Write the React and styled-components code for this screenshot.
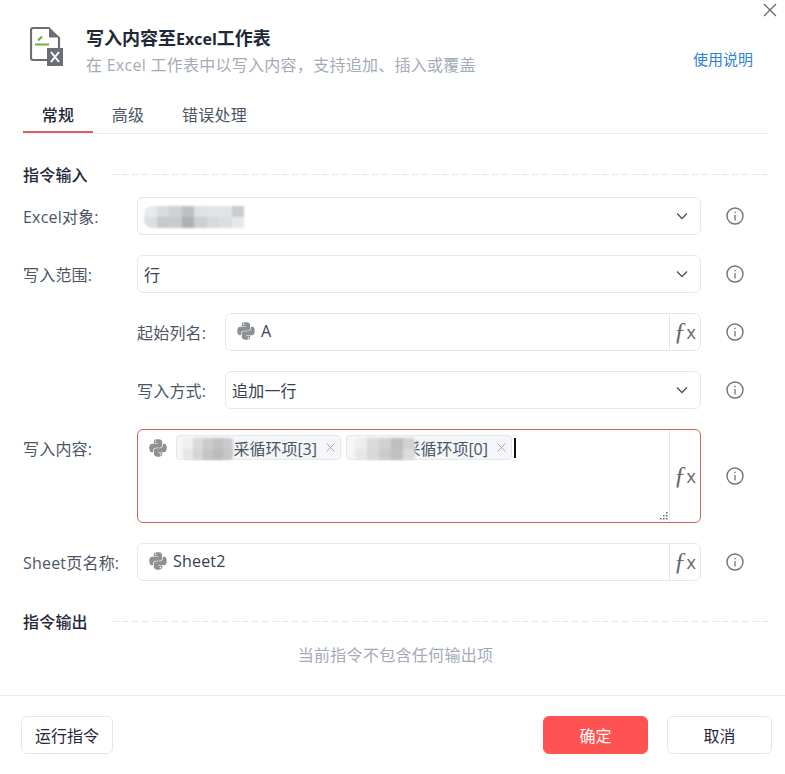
import React from 'react';
import styled, { createGlobalStyle } from 'styled-components';
import { FaPython } from 'react-icons/fa';

const GlobalStyle = createGlobalStyle`
  html, body {
    margin: 0;
    padding: 0;
    background: #fff;
  }
  * {
    box-sizing: border-box;
  }
`;

const Dialog = styled.div`
  position: relative;
  width: 785px;
  height: 774px;
  overflow: hidden;
  background: #fff;
  color: #1f2937;
  font-family: "Open Sans", "Noto Sans CJK SC", sans-serif;
  font-size: 16px;
  letter-spacing: 0.2px;
  display: flex;
  flex-direction: column;
`;

const CloseButton = styled.button`
  position: absolute;
  top: 3px;
  right: 8px;
  width: 14px;
  height: 14px;
  padding: 0;
  border: 0;
  background: none;
  color: #666;
  svg {
    display: block;
  }
`;

const Header = styled.header`
  height: 100px;
  padding: 26px 32px 0 30px;
  display: flex;
  align-items: flex-start;
`;

const TitleBlock = styled.div`
  margin-left: 23px;
  flex: 1;
`;

const Title = styled.h1`
  margin: 0;
  font-size: 18px;
  line-height: 24px;
  font-weight: 700;
  letter-spacing: 0;
  color: #1f2937;
`;

const TitleLatin = styled.span`
  font-size: 16px;
`;

const Subtitle = styled.p`
  margin: 2px 0 0;
  font-size: 16px;
  line-height: 24px;
  letter-spacing: 0.27px;
  color: #a3abb8;
`;

const HelpLink = styled.a`
  margin-top: 23px;
  font-size: 15px;
  line-height: 20px;
  letter-spacing: 0;
  color: #2f80d8;
`;

const Tabs = styled.nav`
  margin: 0 17px 0 23px;
  height: 34px;
  display: flex;
  border-bottom: 1px solid #eceef0;
`;

const Tab = styled.div`
  width: ${p => p.$width}px;
  height: 33px;
  line-height: 30px;
  text-align: center;
  color: ${p => (p.$active ? '#1f2937' : '#4b5563')};
  font-weight: ${p => (p.$active ? 500 : 400)};
  border-bottom: ${p => (p.$active ? '2px solid #d9605f' : '0')};
`;

const Body = styled.main`
  flex: 1;
  padding: 28px 17px 0 23px;
  display: flex;
  flex-direction: column;
`;

const Section = styled.div`
  height: 24px;
  margin-top: ${p => p.$gap || 0}px;
  display: flex;
  align-items: center;
  font-weight: 500;
  color: #1f2937;
  &::after {
    content: '';
    flex: 1;
    height: 1px;
    margin-left: 24px;
    background: repeating-linear-gradient(90deg, #e4e7ea 0 7px, transparent 7px 10px);
  }
`;

const Rows = styled.div`
  margin-top: 11px;
  display: flex;
  flex-direction: column;
  gap: 20px;
`;

const Row = styled.div`
  display: flex;
  align-items: ${p => (p.$top ? 'flex-start' : 'center')};
  padding-left: ${p => (p.$indent ? '114px' : '0')};
`;

const Label = styled.label`
  width: ${p => (p.$indent ? 88 : 114)}px;
  height: 38px;
  flex: none;
  line-height: 40px;
  color: #4b5563;
`;

const Field = styled.div`
  position: relative;
  flex: 1;
  height: ${p => (p.$tall ? 94 : 38)}px;
  display: flex;
  align-items: ${p => (p.$tall ? 'flex-start' : 'center')};
  border: 1px solid ${p => (p.$error ? '#d9605f' : '#e5e7ea')};
  border-radius: 6px;
  background: #fff;
  padding-left: ${p => (p.$expr ? 10 : 6)}px;
  padding-top: ${p => (p.$tall ? 5 : 0)}px;
`;

const FieldText = styled.span`
  flex: 1;
  min-width: 0;
  line-height: 24px;
  color: #374151;
  margin-top: ${p => (p.$latin ? -2 : 2)}px;
`;

const Chevron = styled.svg`
  width: 12px;
  height: 8px;
  margin-right: 12px;
  flex: none;
  color: #4b5563;
`;

const PythonMark = styled(FaPython)`
  width: 20px;
  height: 20px;
  flex: none;
  margin-right: ${p => (p.$tall ? 8 : 5)}px;
  margin-top: ${p => (p.$tall ? '3px' : '-2px')};
  color: #8e9194;
`;

const FxSlot = styled.div`
  width: 31px;
  flex: none;
  align-self: stretch;
  margin-top: ${p => (p.$tall ? '-5px' : '0')};
  border-left: 1px solid #e5e7ea;
  display: flex;
  align-items: center;
  justify-content: center;
  color: #63676e;
`;

const FxF = styled.span`
  font-family: "Liberation Serif", serif;
  font-style: italic;
  font-size: 25px;
  line-height: 24px;
`;

const FxX = styled.span`
  font-family: "Open Sans", sans-serif;
  font-size: 18px;
  line-height: 24px;
`;

const InfoSlot = styled.div`
  width: 67px;
  flex: none;
  align-self: stretch;
  display: flex;
  align-items: center;
  padding-left: 25px;
  color: #6f747c;
`;

const Chips = styled.div`
  flex: 1;
  display: flex;
  align-items: center;
  gap: 5px;
`;

const Chip = styled.span`
  height: 25px;
  width: ${p => p.$width}px;
  padding: 0 5px 0 8px;
  display: inline-flex;
  align-items: center;
  background: #f5f6f7;
  border: 1px solid #e5e7ea;
  border-radius: 4px;
  font-size: 16px;
  letter-spacing: 0;
  color: #4b5563;
  white-space: nowrap;
`;

const ChipText = styled.span`
  flex: 1;
  text-align: right;
`;

const ChipClose = styled.svg`
  width: 9px;
  height: 9px;
  margin-left: 9px;
  flex: none;
  color: #a8adb5;
`;

const Caret = styled.span`
  width: 2px;
  height: 20px;
  margin-left: -3px;
  background: #111;
`;

const Grip = styled.svg`
  position: absolute;
  right: 32px;
  bottom: 2px;
  width: 8px;
  height: 8px;
  color: #666;
`;

const Mosaic = styled.span`
  display: inline-grid;
  grid-template-columns: repeat(${p => p.$cols}, ${p => p.$cell}px);
  grid-auto-rows: ${p => p.$rowHeight}px;
  vertical-align: middle;
  margin-top: -3px;
  flex: none;
  filter: blur(0.8px);
  border-radius: 8px 0 0 8px;
  overflow: hidden;
`;

const MosaicCell = styled.i`
  display: block;
  background: ${p => p.$shade};
`;

const ChipMosaic = styled(Mosaic)`
  position: absolute;
  top: 3px;
  margin-top: 0;
  left: ${p => p.$left}px;
  border-radius: 4px;
`;

const ChipWrap = styled.span`
  position: relative;
  display: inline-flex;
`;

const EmptyNote = styled.p`
  margin: 10px 0 0;
  text-align: center;
  line-height: 24px;
  letter-spacing: 0.3px;
  color: #a3abb8;
`;

const Footer = styled.footer`
  height: 79px;
  padding: 20px 13px 0 21px;
  border-top: 1px solid #eceef0;
  display: flex;
  align-items: flex-start;
  gap: 19px;
`;

const Button = styled.button`
  width: ${p => p.$width}px;
  height: 38px;
  padding: 0;
  border: 1px solid ${p => (p.$primary ? '#ff5252' : '#e5e7ea')};
  border-radius: 6px;
  background: ${p => (p.$primary ? '#ff5252' : '#fff')};
  color: ${p => (p.$primary ? '#fff' : '#1f2937')};
  font: inherit;
  &:first-child {
    margin-right: auto;
  }
`;

const Mosaics = {
  object: ['#e8e9ea', '#d9dbdd', '#cfd1d4', '#bcc0c4', '#dfe1e2', '#e2e3e4', '#e2e4e5', '#c9cbce', '#dcdee0', '#c6c9cc', '#c8cbce', '#adb1b5', '#cdd0d3', '#d7d9db', '#dcdedf', '#e6e7e8'],
  chipA: ['#eef0f1', '#d8dadb', '#c9cbcd', '#bfc1c3', '#c8cacc', '#e4e5e6', '#d3d5d6', '#c2c4c6', '#b9bbbd', '#c4c6c8'],
  chipB: ['#eceeef', '#d9dbdc', '#cfd1d2', '#bcbec0', '#cfd1d3', '#e6e7e8', '#d7d9da', '#c9cbcd', '#bfc1c3', '#d9dbdc'],
};

const ExcelIcon = () => (
  <svg width="33" height="40" viewBox="0 0 33 40" fill="none">
    <path d="M19.500 2H3a2 2 0 0 0-2 2v28a2 2 0 0 0 2 2h15M29 11v12" stroke="#6b6e75" strokeWidth="2.200" />
    <path d="M19 1l11 10.500H19z" fill="#6b6e75" />
    <path d="M8 14.500l4-4M5 18.500h14" stroke="#6cb33f" strokeWidth="2.200" />
    <rect x="17" y="22" width="16" height="18" fill="#6b6e75" />
    <path d="M21 26l8 10M29 26l-8 10" stroke="#fff" strokeWidth="2" />
  </svg>
);

const InfoIcon = () => (
  <svg width="18" height="18" viewBox="0 0 18 18" fill="none" stroke="currentColor">
    <circle cx="9" cy="9" r="8" strokeWidth="1.400" />
    <path d="M9 8v5.500" strokeWidth="1.300" />
    <path d="M9 4.800v1.400" strokeWidth="1.300" />
  </svg>
);

const ChevronIcon = () => (
  <Chevron viewBox="0 0 12 8" fill="none" stroke="currentColor" strokeWidth="1.400">
    <path d="M1 1.500l5 5 5-5" />
  </Chevron>
);

const ChipCloseIcon = () => (
  <ChipClose viewBox="0 0 9 9" fill="none" stroke="currentColor" strokeWidth="1">
    <path d="M.5.500l8 8M8.500.500l-8 8" />
  </ChipClose>
);

const FxButton = ({ tall }) => (
  <FxSlot $tall={tall}>
    <FxF>ƒ</FxF>
    <FxX>x</FxX>
  </FxSlot>
);

const MosaicBlock = ({ as: Comp = Mosaic, shades, ...rest }) => (
  <Comp {...rest}>
    {shades.map((shade, i) => <MosaicCell key={i} $shade={shade} />)}
  </Comp>
);

const App = () => (
  <Dialog>
    <GlobalStyle />
    <CloseButton aria-label="关闭">
      <svg width="14" height="14" viewBox="0 0 14 14" fill="none" stroke="currentColor" strokeWidth="1.200">
        <path d="M1 1l12 12M13 1L1 13" />
      </svg>
    </CloseButton>

    <Header>
      <ExcelIcon />
      <TitleBlock>
        <Title>写入内容至<TitleLatin>Excel</TitleLatin>工作表</Title>
        <Subtitle>{'在 Excel 工作表中以写入内容\uFF0C支持追加、插入或覆盖'}</Subtitle>
      </TitleBlock>
      <HelpLink>使用说明</HelpLink>
    </Header>

    <Tabs>
      <Tab $active $width={70}>常规</Tab>
      <Tab $width={70}>高级</Tab>
      <Tab $width={103}>错误处理</Tab>
    </Tabs>

    <Body>
      <Section>指令输入</Section>
      <Rows>
        <Row>
          <Label>Excel对象:</Label>
          <Field>
            <FieldText>
              <MosaicBlock shades={Mosaics.object} $cols={8} $cell={12.500} $rowHeight={11} />
            </FieldText>
            <ChevronIcon />
          </Field>
          <InfoSlot><InfoIcon /></InfoSlot>
        </Row>
        <Row>
          <Label>写入范围:</Label>
          <Field>
            <FieldText>行</FieldText>
            <ChevronIcon />
          </Field>
          <InfoSlot><InfoIcon /></InfoSlot>
        </Row>
        <Row $indent>
          <Label $indent>起始列名:</Label>
          <Field $expr>
            <PythonMark />
            <FieldText $latin>A</FieldText>
            <FxButton />
          </Field>
          <InfoSlot><InfoIcon /></InfoSlot>
        </Row>
        <Row $indent>
          <Label $indent>写入方式:</Label>
          <Field>
            <FieldText>追加一行</FieldText>
            <ChevronIcon />
          </Field>
          <InfoSlot><InfoIcon /></InfoSlot>
        </Row>
        <Row $top>
          <Label>写入内容:</Label>
          <Field $tall $error $expr>
            <PythonMark $tall />
            <Chips>
              <ChipWrap>
                <Chip $width={165}>
                  <ChipText>采循环项[3]</ChipText>
                  <ChipCloseIcon />
                </Chip>
                <MosaicBlock as={ChipMosaic} shades={Mosaics.chipA} $left={7} $cols={5} $cell={10} $rowHeight={11} />
              </ChipWrap>
              <ChipWrap>
                <Chip $width={166}>
                  <ChipText>采循环项[0]</ChipText>
                  <ChipCloseIcon />
                </Chip>
                <MosaicBlock as={ChipMosaic} shades={Mosaics.chipB} $left={9} $cols={5} $cell={12} $rowHeight={11} />
              </ChipWrap>
              <Caret />
            </Chips>
            <FxButton tall />
            <Grip viewBox="0 0 8 8" fill="currentColor">
              <rect x="6" y="0" width="1.500" height="1.500" />
              <rect x="3" y="3" width="1.500" height="1.500" />
              <rect x="6" y="3" width="1.500" height="1.500" />
              <rect x="0" y="6" width="1.500" height="1.500" />
              <rect x="3" y="6" width="1.500" height="1.500" />
              <rect x="6" y="6" width="1.500" height="1.500" />
            </Grip>
          </Field>
          <InfoSlot><InfoIcon /></InfoSlot>
        </Row>
        <Row>
          <Label>Sheet页名称:</Label>
          <Field $expr>
            <PythonMark />
            <FieldText $latin>Sheet2</FieldText>
            <FxButton />
          </Field>
          <InfoSlot><InfoIcon /></InfoSlot>
        </Row>
      </Rows>
      <Section $gap={28}>指令输出</Section>
      <EmptyNote>当前指令不包含任何输出项</EmptyNote>
    </Body>

    <Footer>
      <Button $width={92}>运行指令</Button>
      <Button $primary $width={105}>确定</Button>
      <Button $width={105}>取消</Button>
    </Footer>
  </Dialog>
);

export default App;
